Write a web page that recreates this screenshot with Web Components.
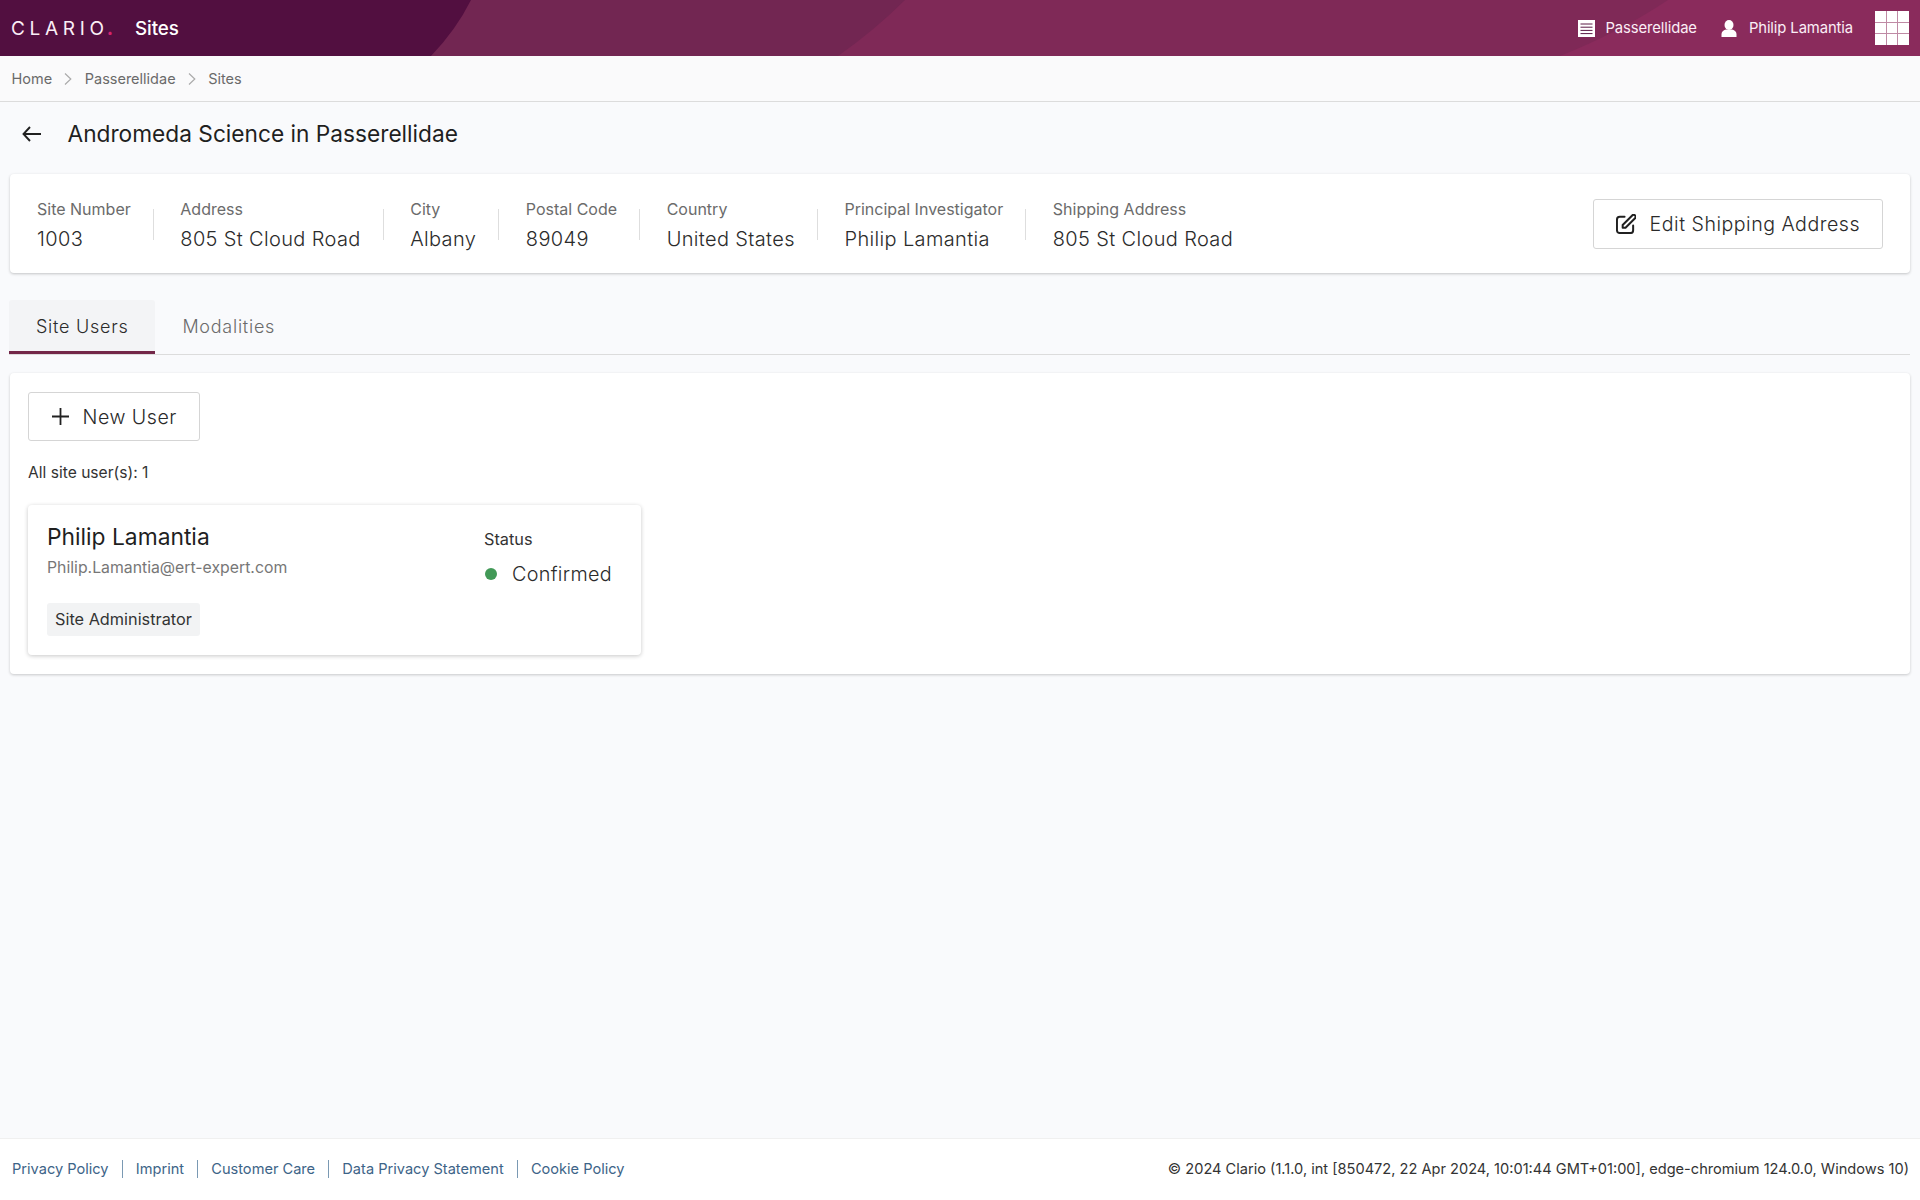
<!DOCTYPE html>
<html lang="en"><head><meta charset="utf-8"><title>Sites</title>
<style>
html,body{margin:0;padding:0;height:100%}
body{background:#f9fafc;font-family:Inter,"Liberation Sans",sans-serif;color:#212121}
</style></head><body>
<app-shell>
  <app-header slot="header" title-text="Sites"></app-header>
  <app-breadcrumb slot="crumbs"><crumb-item>Home</crumb-item><crumb-item>Passerellidae</crumb-item><crumb-item last>Sites</crumb-item></app-breadcrumb>
  <page-title>Andromeda Science in Passerellidae</page-title>
  <info-card>
    <info-item label="Site Number" value="1003"></info-item>
    <info-item label="Address" value="805 St Cloud Road"></info-item>
    <info-item label="City" value="Albany"></info-item>
    <info-item label="Postal Code" value="89049"></info-item>
    <info-item label="Country" value="United States"></info-item>
    <info-item label="Principal Investigator" value="Philip Lamantia"></info-item>
    <info-item label="Shipping Address" value="805 St Cloud Road" last></info-item>
    <outline-button slot="action" icon="edit">Edit Shipping Address</outline-button>
  </info-card>
  <tab-bar><tab-item active>Site Users</tab-item><tab-item>Modalities</tab-item></tab-bar>
  <content-card>
    <outline-button icon="plus" small>New User</outline-button>
    <count-line>All site user(s): 1</count-line>
    <user-card name="Philip Lamantia" email="Philip.Lamantia@ert-expert.com" role="Site Administrator" status="Confirmed"></user-card>
  </content-card>
  <app-footer slot="footer"></app-footer>
</app-shell>
<script>
function def(name, html){
  customElements.define(name, class extends HTMLElement{
    constructor(){super();this.attachShadow({mode:'open'});}
    connectedCallback(){
      const a=n=>this.getAttribute(n)||'';
      this.shadowRoot.innerHTML=typeof html==='function'?html(a,this):html;
    }
  });
}
const FONT='font-family:Inter,"Liberation Sans",sans-serif;';
def('app-shell',`<style>
:host{display:flex;flex-direction:column;min-height:1200px;${FONT}}
main{flex:1;display:flex;flex-direction:column;padding:0 10px}
</style><slot name="header"></slot><slot name="crumbs"></slot><main><slot></slot></main><slot name="footer"></slot>`);

def('app-header',a=>`<style>
:host{display:flex;align-items:center;height:56px;position:relative;background:#520f40;color:#fff;overflow:hidden}
svg.bg{position:absolute;inset:0;width:100%;height:100%}
.l,.r{position:relative;display:flex;align-items:center}
.l{padding-left:11px;flex:1}
.logo{display:block;width:102px;font-size:19px;font-weight:400;letter-spacing:4.700px;line-height:1;color:#fbeef6;white-space:nowrap}
.logo i{font-style:normal;color:#d6246e;font-weight:700;letter-spacing:0;margin-left:-2px}
.t{font-size:18.800px;font-weight:500;margin-left:22px;letter-spacing:-.1px}
.r{padding-right:11px;font-size:14.800px;letter-spacing:-.1px;color:#fbeef6}
.r svg{display:block}
.grid{display:grid;grid-template-columns:repeat(3,1fr);grid-template-rows:repeat(3,1fr);gap:1px;width:34px;height:34px;margin-left:22px;background:rgba(255,255,255,.45)}
.grid b{background:#fff}
</style>
<svg class="bg" viewBox="0 0 1920 56" preserveAspectRatio="none">
<path d="M431 56Q456 30 471 0H1920V56Z" fill="#722652"/>
<path d="M838 56Q875 30 905 0H1920V56Z" fill="#7f2957"/>
<path d="M1560 56Q1620 32 1668 0H1920V56Z" fill="#8a2b5c"/>
</svg>
<div class="l"><span class="logo">CLARIO<i>.</i></span><span class="t">${a('title-text')}</span></div>
<div class="r">
<svg width="17" height="17" viewBox="0 0 17 17" style="margin-right:10px"><rect width="17" height="17" fill="#fff"/><path d="M2.500 4h12M2.500 7.200h12M2.500 10.400h12M2.500 13.600h12" stroke="#5a1a45" stroke-width="1"/></svg>
<span>Passerellidae</span>
<svg width="16" height="17" viewBox="0 0 16 17" style="margin:0 12px 0 24px"><ellipse cx="8" cy="5" rx="4.500" ry="5" fill="#fff"/><path d="M0.500 17v-3C.5 11.500 3 10 5 9.500h6c2 .5 4.500 2 4.500 4.500v3Z" fill="#fff"/></svg>
<span>Philip Lamantia</span>
<div class="grid"><b></b><b></b><b></b><b></b><b></b><b></b><b></b><b></b><b></b></div>
</div>`);

def('app-breadcrumb',`<style>
:host{display:flex;align-items:center;height:45px;border-bottom:1px solid #dcdcdc;background:#fafafb;padding:0 11.500px;font-size:14.500px;color:#6a6a6a}
</style><slot></slot>`);
def('crumb-item',(a,el)=>`<style>
:host{display:inline-flex;align-items:center}
svg{margin:0 12.300px;display:block}
</style><span><slot></slot></span>${el.hasAttribute('last')?'':'<svg width="8" height="12" viewBox="0 0 8 12" fill="none" stroke="#ababab" stroke-width="1.200"><path d="M1 .5 6.800 6 1 11.500"/></svg>'}`);

def('page-title',`<style>
:host{display:flex;align-items:center;height:63px;margin-bottom:9px;font-size:22.700px;color:#1f1f1f}
svg{margin:0 26.500px 0 12px;flex:none}
</style><svg width="19" height="16" viewBox="0 0 19 16" fill="none" stroke="#212121" stroke-width="1.900"><path d="M19 8H1.500M8 1 1.500 8 8 15"/></svg><span><slot></slot></span>`);

def('info-card',`<style>
:host{display:flex;align-items:center;justify-content:space-between;height:99px;background:#fff;border-radius:4px;box-shadow:0 1px 3px rgba(0,0,0,.22);padding:0 27px;box-sizing:border-box}
.i{display:flex;padding-top:4px}
</style><div class="i"><slot></slot></div><slot name="action"></slot>`);

def('info-item',(a,el)=>`<style>
:host{display:flex}
.d{display:flex;flex-direction:column}
.k{font-size:16px;line-height:20px;color:#6b6b6b}
.v{font-size:20px;line-height:28px;margin-top:6px;letter-spacing:.35px;color:#2b2b2b;font-weight:350}
.s{width:1px;height:31px;background:#dedede;margin:10px 26.600px 0 22px}
</style><div class="d"><div class="k">${a('label')}</div><div class="v">${a('value')}</div></div>${el.hasAttribute('last')?'':'<div class="s"></div>'}`);

const icons={
 edit:`<svg width="20" height="20" viewBox="0 0 21 21" fill="none" stroke="#212121" stroke-width="2.100" stroke-linejoin="round" stroke-linecap="round"><path d="M9 3H4a3 3 0 0 0-3 3v11a3 3 0 0 0 3 3h11a3 3 0 0 0 3-3v-5"/><path d="M7 14.500v-3L17 1.500a2 2 0 0 1 3 3L10 14.500Z"/></svg>`,
 plus:`<svg width="17" height="17" viewBox="0 0 17 17" stroke="#212121" stroke-width="1.800"><path d="M8.500 0v17M0 8.500h17"/></svg>`
};
def('outline-button',(a)=>`<style>
:host{display:inline-flex;align-items:center;box-sizing:border-box;height:50px;background:#fff;border:1px solid #d5d5d5;border-radius:3px;font-size:19.600px;color:#2a2a2a;letter-spacing:.5px;font-weight:350;padding:0 22px;white-space:nowrap}
:host([small]){padding:0 22.500px;height:49.500px}
svg{margin-right:14px;flex:none}
</style>${icons[a('icon')]}<span><slot></slot></span>`);

def('tab-bar',`<style>
:host{display:flex;margin:27px 0 18px -1px;height:55px;border-bottom:1px solid #dcdcdc;box-sizing:border-box}
</style><slot></slot>`);
def('tab-item',`<style>
:host{display:flex;align-items:center;height:54px;padding:1px 27px 0;box-sizing:border-box;font-size:18px;letter-spacing:.74px;font-weight:350;color:#6b6b6b;border-bottom:3px solid transparent;border-radius:3px 3px 0 0}
:host([active]){background:#f3f4f6;color:#2b2b2b;border-bottom-color:#732748}
</style><slot></slot>`);

def('content-card',`<style>
:host{display:flex;flex-direction:column;align-items:flex-start;height:301px;box-sizing:border-box;background:#fff;border-radius:4px;box-shadow:0 1px 3px rgba(0,0,0,.2);padding:19px 18px}
</style><slot></slot>`);
def('count-line',`<style>
:host{display:block;font-size:15.600px;line-height:20px;margin-top:22px;color:#333}
</style><slot></slot>`);

def('user-card',a=>`<style>
:host{display:flex;justify-content:space-between;box-sizing:border-box;width:613px;height:150px;margin-top:22px;background:#fff;border-radius:4px;box-shadow:0 1px 4px rgba(0,0,0,.22);padding:18px 29px 0 19px}
.n{font-size:22.800px;line-height:28px;color:#1f1f1f}
.e{font-size:15.800px;line-height:20px;color:#777;margin-top:7px}
.c{display:inline-block;margin-top:25px;background:#f2f3f4;border-radius:3px;padding:0 8px;font-size:16.300px;line-height:33px;color:#333}
.s{font-size:16.300px;line-height:20px;color:#333;margin-top:6px}
.v{display:flex;align-items:center;font-size:19.800px;letter-spacing:.32px;font-weight:350;margin-top:11px;color:#2b2b2b;line-height:28px}
.v i{width:12px;height:12px;border-radius:50%;background:#429957;margin:0 15px 0 1px}
</style><div><div class="n">${a('name')}</div><div class="e">${a('email')}</div><div class="c">${a('role')}</div></div><div><div class="s">Status</div><div class="v"><i></i>${a('status')}</div></div>`);

def('app-footer',`<style>
:host{display:flex;align-items:center;justify-content:space-between;height:62px;box-sizing:border-box;background:#fff;border-top:1px solid #f0f0f0;padding:0 11px 1px 12px;font-size:14.600px;color:#333}
.l{display:flex;align-items:center;color:#3d6488;font-size:14.600px}
.l i{width:1px;height:18px;background:#7a99b3;margin:0 13.100px}
</style><div class="l"><span>Privacy Policy</span><i></i><span>Imprint</span><i></i><span>Customer Care</span><i></i><span>Data Privacy Statement</span><i></i><span>Cookie Policy</span></div><div>© 2024 Clario (1.1.0, int [850472, 22 Apr 2024, 10:01:44 GMT+01:00], edge-chromium 124.0.0, Windows 10)</div>`);
</script>
</body></html>
